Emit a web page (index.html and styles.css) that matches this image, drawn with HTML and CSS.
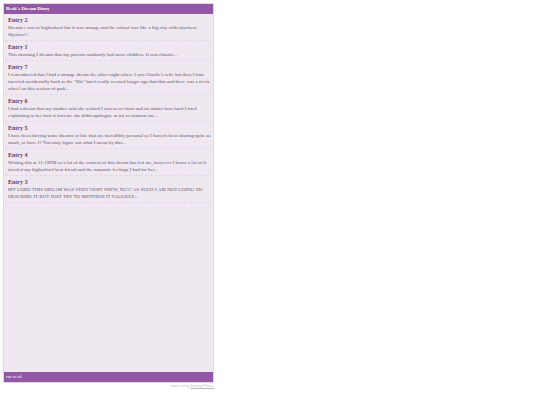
FILE: index.html
```
<!DOCTYPE html>
<html lang="en">
<head>
  <meta charset="UTF-8" />
  <meta name="viewport" content="width=device-width, initial-scale=1.0"/>
  <title>Beak's Dream Diary</title>
  <link rel="stylesheet" href="styles.css">
</head>
<body>

  <div class="container">
    <div class="feed">
      <h1 class="feed-title">Beak's Dream Diary</h1>

      <!-- Entries -->
      <div class="entries">
        <div class="entry">
          <h2>Entry 2</h2>
          <p>Dreamt i was in highschool but it was strange and the school was like a big city with skyrisers. Skyriser?..</p>
        </div>
        <div class="entry">
          <h2>Entry 1</h2>
          <p>This morning I dreamt that my parents randomly had more children. It was chaotic...</p>
        </div>
        <div class="entry">
          <h2>Entry 7</h2>
          <p>I remembered that I had a strange dream the other night where I was Charlie's wife but then I time traveled accidentally back to the "80s" but it really seemed longer ago that that and there was a ferris wheel on this section of park...</p>
        </div>
        <div class="entry">
          <h2>Entry 6</h2>
          <p>I had a dream that my mother said she wished I was never born and no matter how hard I tried explaining to her how it hurt me she didnt apologise or try to comfort me...</p>
        </div>
        <div class="entry">
          <h2>Entry 5</h2>
          <p>I have been having some dreams of late that are incredibly personal so I haven't been sharing quite as much, or have I? You may figure out what I mean by this...</p>
        </div>
        <div class="entry">
          <h2>Entry 4</h2>
          <p>Writing this at 11:19PM so a lot of the content of this dream has left me, however I know a lot of it involed my highschool best friend and the romantic feelings I had for her...</p>
        </div>
        <div class="entry">
          <h2>Entry 3</h2>
          <p>MY LORD THIS DREAM WAS VERY VERY NSFW, NC17 AS SUCH I AM NOT GOING TO DESCRIBE IT BUT JUST TRY TO MENTION IT VAGUELY...</p>
        </div>
      </div>

      <div class="feed-footer"><a href="#">rss feed</a></div>
    </div>

    <p class="powered">powered by <a href="#">Surfing Waves</a></p>
  </div>

</body>
</html>
```
FILE: styles.css
```
* {
  box-sizing: border-box;
}

body {
  margin: 0;
  padding: 3px;
  font-family: "Liberation Serif", "Times New Roman", serif;
  font-size: 5px;
  line-height: 7px;
  color: #62566a;
  background: #fff;
}

h1,
h2,
p {
  margin: 0;
  font-size: 5px;
}

.container {
  display: flex;
  flex-direction: column;
  width: 39%;
  min-width: 211px;
  min-height: calc(100vh - 19px);
}

.feed {
  display: flex;
  flex-direction: column;
  flex: 1;
  border: 1px solid #e0d6e4;
  background: #efe8f0;
}

.feed-title {
  padding: 1px 2px 2px;
  color: #fff;
  background: #9257a5;
}

.entries {
  flex: 1;
  padding: 0 1px;
}

.entry {
  padding: 3px 1px 2px 3px;
  border-bottom: 1px dashed #e2d9e5;
}

.entry h2 {
  font-size: 6px;
  color: #5a3d6b;
}

.feed-footer {
  padding: 1px 2px 2px;
  background: #9257a5;
}

.feed-footer a {
  color: #fff;
  text-decoration: none;
}

.powered {
  font-size: 4px;
  line-height: 6px;
  text-align: right;
  color: #bbb;
}

.powered a {
  color: #bbb;
}
```
